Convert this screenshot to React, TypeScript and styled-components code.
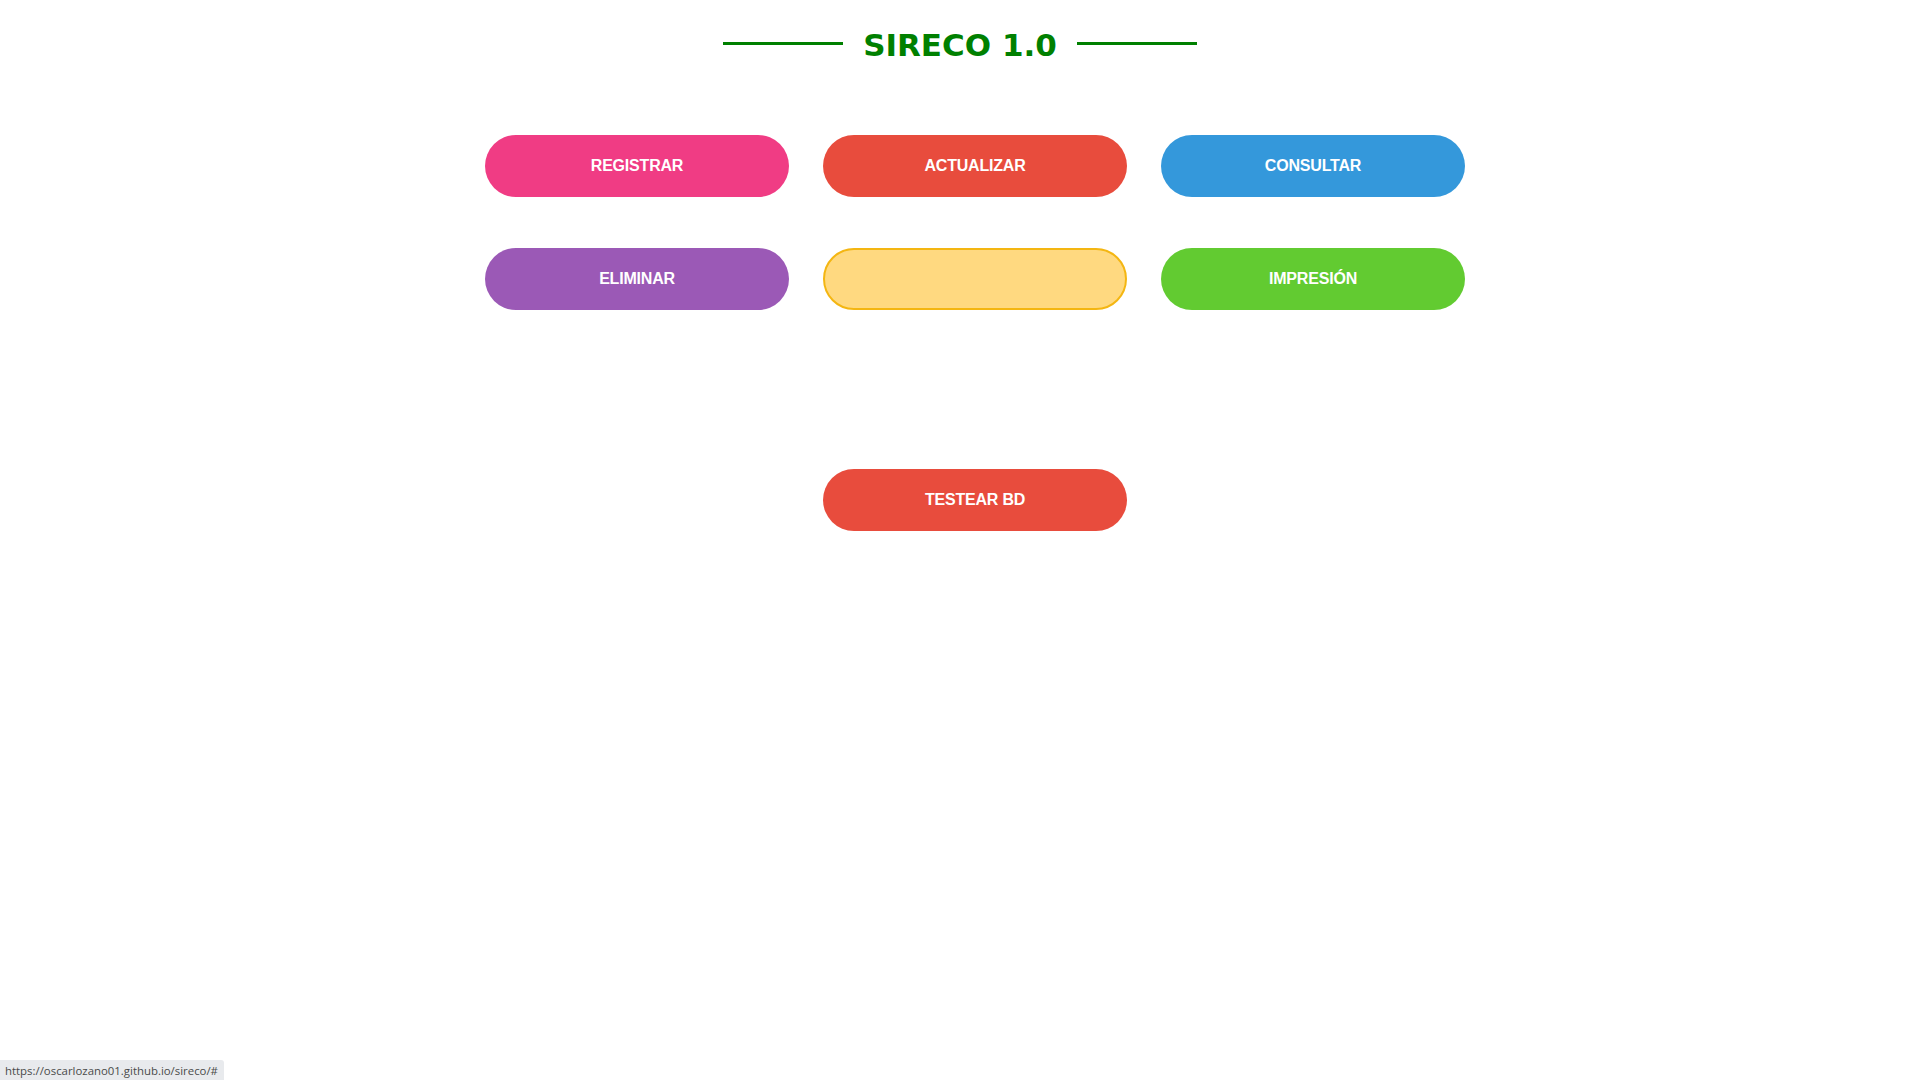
import React from "react";
import styled, { createGlobalStyle } from "styled-components";

const Global = createGlobalStyle`
  html, body { margin: 0; padding: 0; background: #ffffff; }
  body { font-family: "Liberation Sans", Arial, sans-serif; }
`;

const Page = styled.div`
  width: 1920px;
  height: 1080px;
  position: relative;
  display: flex;
  flex-direction: column;
  align-items: center;
`;

const Header = styled.h1`
  margin: 0;
  padding-top: 25px;
  display: flex;
  align-items: center;
  gap: 20px;
  font-family: "Comic Sans MS", "DejaVu Sans", sans-serif;
  font-weight: bold;
  font-size: 31px;
  line-height: 40px;
  color: #008000;
`;

const Rule = styled.span`
  display: block;
  width: 120px;
  height: 3px;
  margin-bottom: 4px;
  background: #008000;
`;

const Grid = styled.div`
  margin-top: 70px;
  padding-left: 30px;
  display: grid;
  grid-template-columns: repeat(3, 304px);
  column-gap: 34px;
  row-gap: 51px;
`;

const Btn = styled.button<{ $bg: string; $border?: string }>`
  height: 62px;
  border-radius: 31px;
  border: ${(p) => (p.$border ? `2px solid ${p.$border}` : "none")};
  background: ${(p) => p.$bg};
  color: #ffffff;
  font-family: "Liberation Sans", Arial, sans-serif;
  font-weight: bold;
  font-size: 16px;
  letter-spacing: -0.2px;
  cursor: pointer;
  padding: 0;
`;

const Spacer = styled.div`
  grid-column: 1 / 4;
  height: 57px;
`;

const Centered = styled(Btn)`
  grid-column: 2;
`;

const Status = styled.div`
  position: absolute;
  left: 0;
  bottom: 0;
  height: 20px;
  padding: 0 6px 0 5px;
  display: flex;
  align-items: center;
  background: #e8eaed;
  border-top-right-radius: 3px;
  font-family: "Open Sans", "Noto Sans", sans-serif;
  font-size: 11.4px;
  color: #4a4a4a;
`;

export default function App() {
  return (
    <>
      <Global />
      <Page>
        <Header>
          <Rule />
          SIRECO 1.0
          <Rule />
        </Header>
        <Grid>
          <Btn $bg="#f03c84">REGISTRAR</Btn>
          <Btn $bg="#e84c3d">ACTUALIZAR</Btn>
          <Btn $bg="#3498db">CONSULTAR</Btn>
          <Btn $bg="#9b59b6">ELIMINAR</Btn>
          <Btn $bg="#ffd980" $border="#f4b612"></Btn>
          <Btn $bg="#62cb31">IMPRESIÓN</Btn>
          <Spacer />
          <Centered $bg="#e84c3d">TESTEAR BD</Centered>
        </Grid>
        <Status>https://oscarlozano01.github.io/sireco/#</Status>
      </Page>
    </>
  );
}
